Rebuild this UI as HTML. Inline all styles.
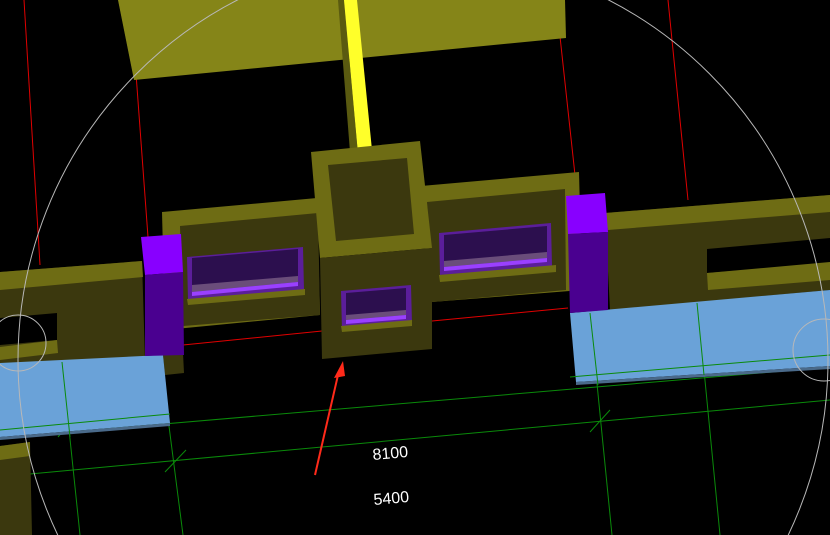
<!DOCTYPE html>
<html><head><style>
html,body{margin:0;padding:0;background:#000;width:830px;height:535px;overflow:hidden}
svg{display:block;overflow:hidden}
text{font-family:"Liberation Sans",sans-serif;fill:#fff;font-size:16px}
</style></head><body>
<svg width="830" height="535" viewBox="0 0 830 535">
<rect width="830" height="535" fill="#000"/>
<g stroke="#e00000" stroke-width="1">
<line x1="24" y1="0" x2="40" y2="265"/>
<line x1="135" y1="60" x2="148" y2="237"/>
<line x1="558" y1="18" x2="575" y2="175"/>
<line x1="668" y1="0" x2="688" y2="200"/>
<line x1="183" y1="345" x2="322" y2="331"/>
<line x1="432" y1="321" x2="568" y2="308"/>
</g>
<g stroke="#0a8a0a" stroke-width="1" fill="none">
<line x1="0" y1="438" x2="830" y2="367"/>
<line x1="30" y1="474" x2="830" y2="400"/>
<line x1="62" y1="362" x2="80" y2="535"/>
<line x1="165" y1="395" x2="183" y2="535"/>
<line x1="590" y1="313" x2="612" y2="535"/>
<line x1="697" y1="298" x2="720" y2="535"/>
<line x1="58" y1="437" x2="78" y2="414"/>
<line x1="165" y1="472" x2="186" y2="450"/>
<line x1="590" y1="432" x2="610" y2="410"/>
<line x1="697" y1="372" x2="716" y2="352"/>
</g>
<polygon points="118,0 565,0 566,38 134,80" fill="#858518"/>
<polygon points="338,0 344,0 358,154 350,152" fill="#5a5a10"/>
<polygon points="344,0 357,0 372,150 358,154" fill="#ffff2a"/>
<polygon points="0,272 142,261 145,360 0,372" fill="#3b380e"/>
<polygon points="0,272 142,261 143,277 0,290" fill="#6e6c14"/>
<polygon points="0,318 57,313 57,340 0,345" fill="#000"/>
<polygon points="0,347 57,340 58,353 0,360" fill="#6e6c14"/>
<polygon points="163,355 183,353 184,373 165,375" fill="#3b380e"/>
<polygon points="0,363 163,355 170,423 0,437" fill="#6aa2d8"/>
<polygon points="0,437 170,423 170,426 0,440" fill="#4a6a8a"/>
<polygon points="0,446 30,442 32,535 0,535" fill="#3b380e"/>
<polygon points="0,446 30,442 30,456 0,460" fill="#6e6c14"/>
<polygon points="162,212 317,198 320,315 165,330" fill="#6e6c14"/>
<polygon points="180,226 318,213 320,315 183,326" fill="#3b380e"/>
<polygon points="187,257 303,247 304,290 188,300" fill="#5b1e9a"/>
<polygon points="192,258 298,249 298,280 192,290" fill="#2c0f4e"/>
<polygon points="192,285 298,276 298,282 192,292" fill="#6a4d7a"/>
<polygon points="192,292 298,282 298,286 192,296" fill="#9a40ff"/>
<polygon points="187,299 305,289 305,295 188,305" fill="#6e6c14"/>
<polygon points="421,186 579,172 582,290 432,302" fill="#6e6c14"/>
<polygon points="427,202 565,189 566,290 432,302" fill="#3b380e"/>
<polygon points="439,233 551,223 552,266 440,275" fill="#5b1e9a"/>
<polygon points="444,235 547,226 547,256 444,265" fill="#2c0f4e"/>
<polygon points="444,261 547,252 547,258 444,267" fill="#6a4d7a"/>
<polygon points="444,267 547,258 547,262 444,271" fill="#9a40ff"/>
<polygon points="439,275 556,265 556,272 440,282" fill="#6e6c14"/>
<polygon points="311,152 420,141 432,248 320,258" fill="#6e6c14"/>
<polygon points="328,165 407,158 414,234 336,241" fill="#3b380e"/>
<polygon points="320,258 432,248 432,349 322,359" fill="#3b380e"/>
<polygon points="341,291 411,285 412,324 342,330" fill="#5b1e9a"/>
<polygon points="346,293 406,288 406,312 346,317" fill="#2c0f4e"/>
<polygon points="346,315 406,310 406,315 346,320" fill="#6a4d7a"/>
<polygon points="346,320 406,315 406,319 346,324" fill="#9a40ff"/>
<polygon points="341,326 412,320 412,326 342,332" fill="#6e6c14"/>
<polygon points="605,213 830,195 830,290 610,310" fill="#3b380e"/>
<polygon points="605,213 830,195 830,212 608,230" fill="#6e6c14"/>
<polygon points="707,249 830,238 830,263 707,273" fill="#000"/>
<polygon points="707,273 830,262 830,280 708,290" fill="#6e6c14"/>
<polygon points="570,313 830,290 830,366 576,382" fill="#6aa2d8"/>
<polygon points="576,382 830,366 830,369 576,385" fill="#4a6a8a"/>
<g stroke="#0a8a0a" stroke-width="1"><line x1="590" y1="313" x2="598" y2="385"/><line x1="697" y1="303" x2="704" y2="375"/><line x1="570" y1="377" x2="830" y2="355"/><line x1="62" y1="362" x2="70" y2="437"/><line x1="0" y1="430" x2="170" y2="414"/></g>
<polygon points="141,237 181,234 183,272 145,275" fill="#8800ff"/>
<polygon points="145,275 183,272 184,355 145,356" fill="#4a0090"/>
<polygon points="566,196 605,193 608,232 568,234" fill="#8800ff"/>
<polygon points="568,234 608,232 608,310 570,313" fill="#4a0090"/>
<g fill="none" stroke="#b8b8b8" stroke-width="1">
<circle cx="423" cy="360" r="405"/>
<circle cx="18" cy="343" r="28"/>
<circle cx="824" cy="350" r="31"/>
</g>
<line x1="315" y1="475" x2="338" y2="375" stroke="#ff2a1a" stroke-width="2"/>
<polygon points="343,361 334,378 345,376" fill="#ff2a1a"/>
<text x="373" y="460" transform="rotate(-5 373 460)">8100</text>
<text x="374" y="505" transform="rotate(-5 374 505)">5400</text>
</svg>
</body></html>
